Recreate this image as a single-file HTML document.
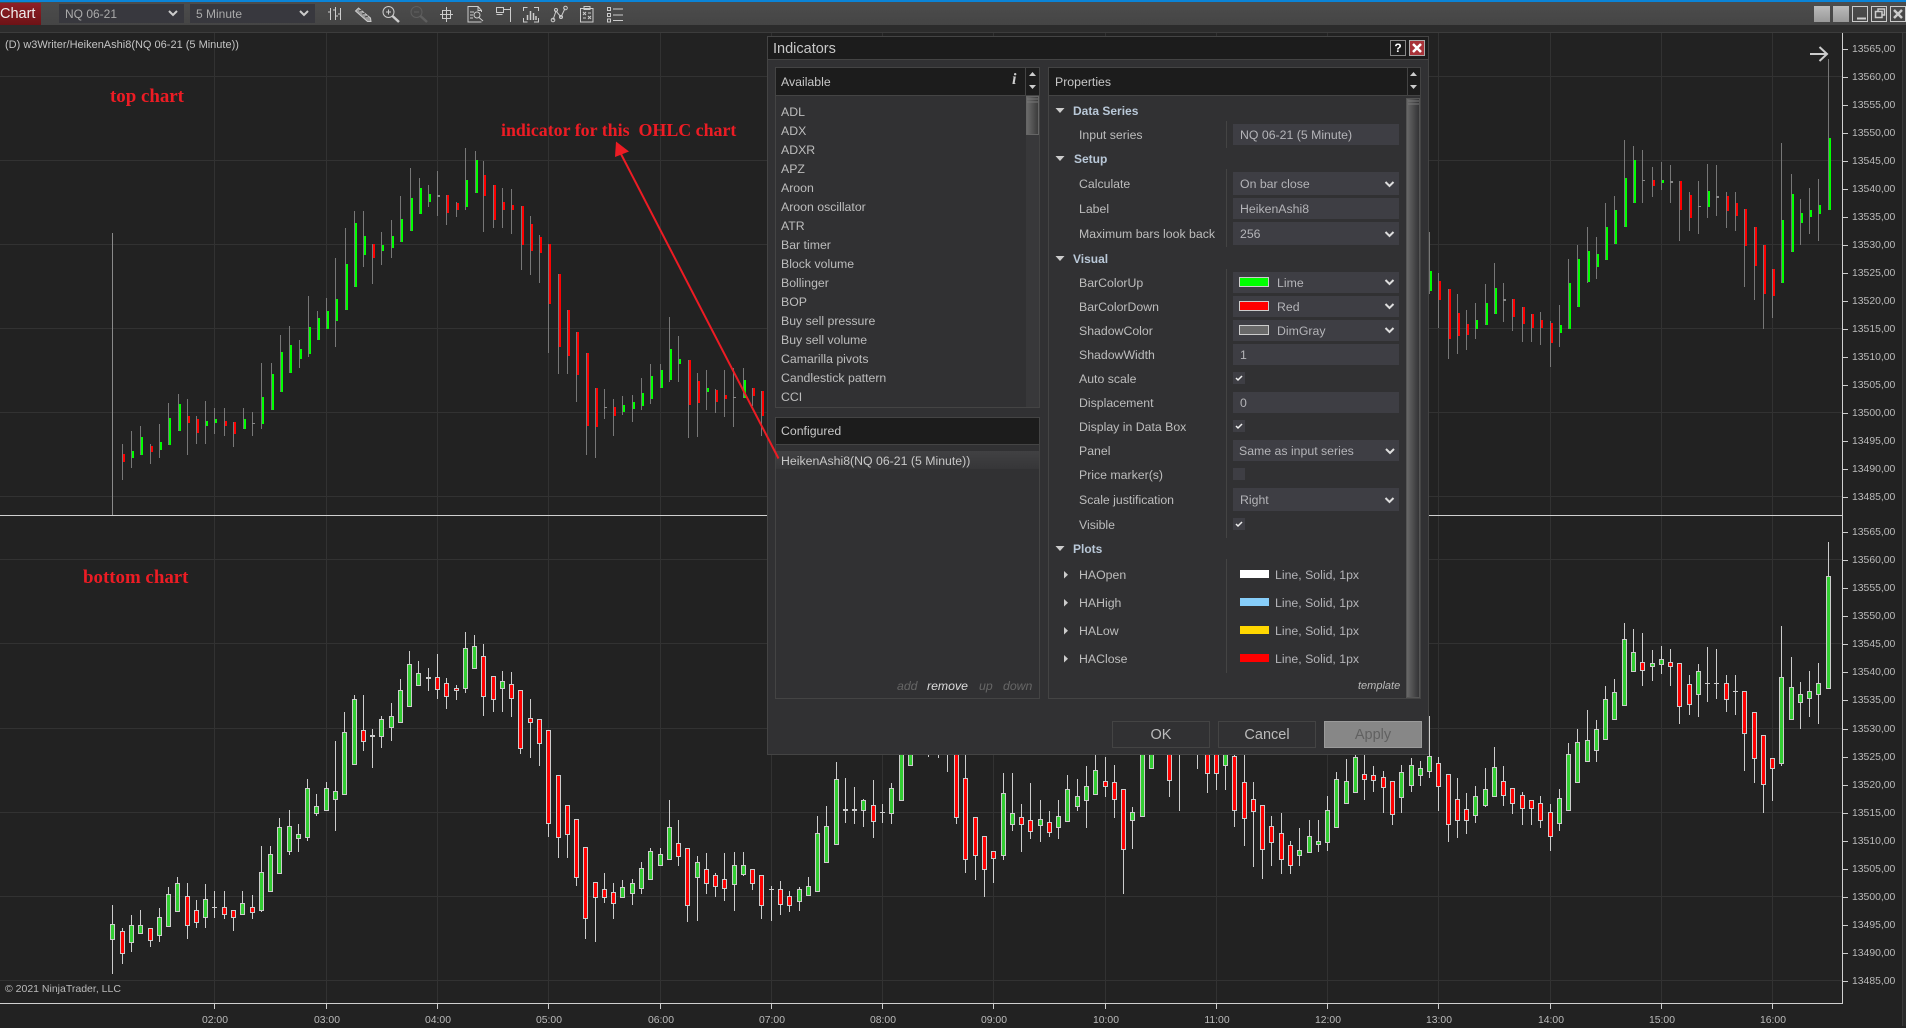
<!DOCTYPE html>
<html><head><meta charset="utf-8"><title>Chart</title>
<style>
html,body{margin:0;padding:0;background:#222;}
body{width:1906px;height:1026px;position:relative;overflow:hidden;font-family:"Liberation Sans",sans-serif;font-size:12.3px;color:#bdbdbd;}
div,span{position:absolute;white-space:pre;}
.y{left:1852px;font-size:10.4px;line-height:14px;height:14px;color:#bbb;margin-top:1px;}
.x{top:1014px;font-size:10.4px;line-height:14px;color:#bbb;width:40px;text-align:center;}
.r{color:#ed1c24;font-family:"Liberation Serif",serif;font-weight:bold;font-size:18.9px;line-height:22px;}
.h{background:#1c1c1c;border:1px solid #444;box-sizing:border-box;}
.t{line-height:16px;height:16px;}
.l{left:1079px;line-height:16px;height:16px;}
.b{left:1073px;line-height:16px;height:16px;font-weight:bold;font-size:12px;color:#b9c8d8;}
.f{left:1233px;width:166px;background:#3e3e44;}
.v{left:1240px;line-height:16px;height:16px;color:#b4b4b8;}
.c{left:1233px;width:12px;height:12px;background:#3e3e44;}
.s{left:1239px;width:30px;height:10px;box-sizing:border-box;border:1px solid #ccc;}
.p{left:1240px;width:29px;height:8px;}
.i{left:781px;line-height:16px;height:16px;}
.btn{top:721px;height:27px;width:98px;box-sizing:border-box;border:1px solid #444;text-align:center;line-height:27px;font-size:14.5px;}
.w{top:6px;width:16px;height:16px;box-sizing:border-box;}
</style></head><body>

<svg id="chart" width="1906" height="1026" style="position:absolute;left:0;top:0" shape-rendering="crispEdges"></svg>

<!-- toolbar -->
<div style="left:0;top:0;width:1906px;height:2px;background:#0a84d8"></div>
<div style="left:0;top:2px;width:1906px;height:23px;background:linear-gradient(#4c4c4c,#454545)"></div>
<div style="left:0;top:25px;width:1906px;height:7px;background:#2c2c2c"></div>
<div style="left:0;top:32px;width:1906px;height:1px;background:#3c3c3c"></div>
<div style="left:0;top:3px;width:41px;height:22px;background:linear-gradient(#8f2026,#6e1216);color:#eee;font-size:14.5px;line-height:23px;">Chart</div>
<div style="left:59px;top:4px;width:125px;height:19px;background:#38383e"></div>
<div style="left:65px;top:6px;line-height:17px;font-size:12px;color:#aaa">NQ 06-21</div>
<div style="left:190px;top:4px;width:125px;height:19px;background:#38383e"></div>
<div style="left:196px;top:6px;line-height:17px;font-size:12px;color:#aaa">5 Minute</div>

<div class="w" style="left:1814px;background:linear-gradient(#bbb,#999)"></div>
<div class="w" style="left:1833px;background:linear-gradient(#bbb,#999)"></div>
<div class="w" style="left:1852px;border:1px solid #ccc"></div>
<div class="w" style="left:1871px;border:1px solid #ccc"></div>
<div class="w" style="left:1890px;border:1px solid #ccc"></div>

<!-- chart text -->
<div style="left:5px;top:37px;font-size:11px;line-height:16px;color:#c4c4c4">(D) w3Writer/HeikenAshi8(NQ 06-21 (5 Minute))</div>
<div class="r" style="left:110px;top:86px">top chart</div>
<div class="r" style="left:501px;top:119px;font-size:17.9px">indicator for this  OHLC chart</div>
<div class="r" style="left:83px;top:567px">bottom chart</div>
<div style="left:5px;top:981px;font-size:10.5px;line-height:16px;color:#bbb">© 2021 NinjaTrader, LLC</div>

<div class="y" style="top:42px">13565,00</div><div class="y" style="top:70px">13560,00</div><div class="y" style="top:98px">13555,00</div><div class="y" style="top:126px">13550,00</div><div class="y" style="top:154px">13545,00</div><div class="y" style="top:182px">13540,00</div><div class="y" style="top:210px">13535,00</div><div class="y" style="top:238px">13530,00</div><div class="y" style="top:266px">13525,00</div><div class="y" style="top:294px">13520,00</div><div class="y" style="top:322px">13515,00</div><div class="y" style="top:350px">13510,00</div><div class="y" style="top:378px">13505,00</div><div class="y" style="top:406px">13500,00</div><div class="y" style="top:434px">13495,00</div><div class="y" style="top:462px">13490,00</div><div class="y" style="top:490px">13485,00</div>
<div class="y" style="top:525px">13565,00</div><div class="y" style="top:553px">13560,00</div><div class="y" style="top:581px">13555,00</div><div class="y" style="top:609px">13550,00</div><div class="y" style="top:637px">13545,00</div><div class="y" style="top:665px">13540,00</div><div class="y" style="top:693px">13535,00</div><div class="y" style="top:722px">13530,00</div><div class="y" style="top:750px">13525,00</div><div class="y" style="top:778px">13520,00</div><div class="y" style="top:806px">13515,00</div><div class="y" style="top:834px">13510,00</div><div class="y" style="top:862px">13505,00</div><div class="y" style="top:890px">13500,00</div><div class="y" style="top:918px">13495,00</div><div class="y" style="top:946px">13490,00</div><div class="y" style="top:974px">13485,00</div>

<div class="x" style="left:195px">02:00</div><div class="x" style="left:307px">03:00</div><div class="x" style="left:418px">04:00</div><div class="x" style="left:529px">05:00</div><div class="x" style="left:641px">06:00</div><div class="x" style="left:752px">07:00</div><div class="x" style="left:863px">08:00</div><div class="x" style="left:974px">09:00</div><div class="x" style="left:1086px">10:00</div><div class="x" style="left:1197px">11:00</div><div class="x" style="left:1308px">12:00</div><div class="x" style="left:1419px">13:00</div><div class="x" style="left:1531px">14:00</div><div class="x" style="left:1642px">15:00</div><div class="x" style="left:1753px">16:00</div>

<!-- dialog -->
<div style="left:767px;top:36px;width:662px;height:719px;background:#313133;border:1px solid #444;box-sizing:border-box"></div>
<div style="left:767px;top:36px;width:662px;height:24px;background:#1c1c1c;border:1px solid #444;box-sizing:border-box"></div>
<div style="left:773px;top:40px;font-size:14.5px;line-height:18px;color:#c8c8c8">Indicators</div>
<div style="left:1390px;top:40px;width:16px;height:16px;box-sizing:border-box;border:1px solid #888;background:#1c1c1c;color:#fff;font-weight:bold;font-size:12px;line-height:14px;text-align:center">?</div>
<div style="left:1409px;top:40px;width:16px;height:16px;box-sizing:border-box;border:1px solid #aaa;background:#a83238"></div>

<!-- available -->
<div style="left:775px;top:95px;width:265px;height:313px;border:1px solid #444;box-sizing:border-box;border-top:0"></div>
<div class="h" style="left:775px;top:67px;width:265px;height:29px"></div>
<div style="left:1025px;top:67px;width:1px;height:28px;background:#444"></div>
<div class="t" style="left:781px;top:74px;color:#c8c8c8">Available</div>
<div style="left:1012px;top:71px;font-family:'Liberation Serif',serif;font-style:italic;font-weight:bold;font-size:16px;line-height:18px;color:#ccc">i</div>
<div style="left:1026px;top:96px;width:13px;height:311px;background:#38383a"></div>
<div style="left:1026px;top:96px;width:13px;height:39px;box-sizing:border-box;border:1px solid #666;background:linear-gradient(90deg,#6a6a6a,#3c3c3c)"></div>
<div class="i" style="top:104px">ADL</div><div class="i" style="top:123px">ADX</div><div class="i" style="top:142px">ADXR</div><div class="i" style="top:161px">APZ</div><div class="i" style="top:180px">Aroon</div><div class="i" style="top:199px">Aroon oscillator</div><div class="i" style="top:218px">ATR</div><div class="i" style="top:237px">Bar timer</div><div class="i" style="top:256px">Block volume</div><div class="i" style="top:275px">Bollinger</div><div class="i" style="top:294px">BOP</div><div class="i" style="top:313px">Buy sell pressure</div><div class="i" style="top:332px">Buy sell volume</div><div class="i" style="top:351px">Camarilla pivots</div><div class="i" style="top:370px">Candlestick pattern</div><div class="i" style="top:389px">CCI</div>

<!-- configured -->
<div style="left:775px;top:444px;width:265px;height:255px;border:1px solid #444;box-sizing:border-box;border-top:0"></div>
<div class="h" style="left:775px;top:417px;width:265px;height:28px"></div>
<div class="t" style="left:781px;top:423px;color:#c8c8c8">Configured</div>
<div style="left:776px;top:451px;width:263px;height:18px;background:linear-gradient(#414143,#363638)"></div>
<div class="t" style="left:781px;top:453px;color:#c8c8c8">HeikenAshi8(NQ 06-21 (5 Minute))</div>
<div class="t" style="left:897px;top:678px;font-style:italic;color:#666">add</div>
<div class="t" style="left:927px;top:678px;font-style:italic;color:#ddd">remove</div>
<div class="t" style="left:979px;top:678px;font-style:italic;color:#666">up</div>
<div class="t" style="left:1003px;top:678px;font-style:italic;color:#666">down</div>

<!-- properties -->
<div style="left:1048px;top:95px;width:373px;height:604px;border:1px solid #444;box-sizing:border-box;border-top:0"></div>
<div class="h" style="left:1048px;top:67px;width:373px;height:29px"></div>
<div style="left:1407px;top:67px;width:1px;height:28px;background:#444"></div>
<div class="t" style="left:1055px;top:74px;color:#c8c8c8">Properties</div>
<div style="left:1406px;top:98px;width:14px;height:600px;box-sizing:border-box;border:1px solid #555;background:linear-gradient(90deg,#686868,#333335)"></div>
<div style="left:1226px;top:121px;width:1px;height:27px;background:#444"></div>
<div style="left:1226px;top:169px;width:1px;height:78px;background:#444"></div>
<div style="left:1226px;top:269px;width:1px;height:269px;background:#444"></div>
<div style="left:1226px;top:559px;width:1px;height:114px;background:#444"></div>

<div class="b" style="top:103px">Data Series</div>
<div class="l" style="top:127px">Input series</div>
<div class="f" style="top:124px;height:21px"></div><div class="v" style="top:127px">NQ 06-21 (5 Minute)</div>
<div class="b" style="top:151px;left:1074px">Setup</div>
<div class="l" style="top:176px">Calculate</div>
<div class="f" style="top:172px;height:23px"></div><div class="v" style="top:176px">On bar close</div>
<div class="l" style="top:201px">Label</div>
<div class="f" style="top:198px;height:21px"></div><div class="v" style="top:201px">HeikenAshi8</div>
<div class="l" style="top:226px">Maximum bars look back</div>
<div class="f" style="top:222px;height:23px"></div><div class="v" style="top:226px">256</div>
<div class="b" style="top:251px">Visual</div>
<div class="l" style="top:275px">BarColorUp</div>
<div class="f" style="top:272px;height:21px"></div><div class="s" style="top:277px;background:#0f0"></div><div class="v" style="left:1277px;top:275px">Lime</div>
<div class="l" style="top:299px">BarColorDown</div>
<div class="f" style="top:296px;height:21px"></div><div class="s" style="top:301px;background:#f00"></div><div class="v" style="left:1277px;top:299px">Red</div>
<div class="l" style="top:323px">ShadowColor</div>
<div class="f" style="top:320px;height:21px"></div><div class="s" style="top:325px;background:#696969"></div><div class="v" style="left:1277px;top:323px">DimGray</div>
<div class="l" style="top:347px">ShadowWidth</div>
<div class="f" style="top:344px;height:21px"></div><div class="v" style="top:347px">1</div>
<div class="l" style="top:371px">Auto scale</div><div class="c" style="top:372px"></div>
<div class="l" style="top:395px">Displacement</div>
<div class="f" style="top:392px;height:21px"></div><div class="v" style="top:395px">0</div>
<div class="l" style="top:419px">Display in Data Box</div><div class="c" style="top:420px"></div>
<div class="l" style="top:443px">Panel</div>
<div class="f" style="top:440px;height:21px"></div><div class="v" style="left:1239px;top:443px">Same as input series</div>
<div class="l" style="top:467px">Price marker(s)</div><div class="c" style="top:468px"></div>
<div class="l" style="top:492px">Scale justification</div>
<div class="f" style="top:488px;height:23px"></div><div class="v" style="top:492px">Right</div>
<div class="l" style="top:517px">Visible</div><div class="c" style="top:518px"></div>
<div class="b" style="top:541px">Plots</div>
<div class="l" style="top:567px">HAOpen</div><div class="p" style="top:570px;background:#fff"></div><div class="v" style="left:1275px;top:567px">Line, Solid, 1px</div>
<div class="l" style="top:595px">HAHigh</div><div class="p" style="top:598px;background:#87cefa"></div><div class="v" style="left:1275px;top:595px">Line, Solid, 1px</div>
<div class="l" style="top:623px">HALow</div><div class="p" style="top:626px;background:#ffd700"></div><div class="v" style="left:1275px;top:623px">Line, Solid, 1px</div>
<div class="l" style="top:651px">HAClose</div><div class="p" style="top:654px;background:#f00"></div><div class="v" style="left:1275px;top:651px">Line, Solid, 1px</div>
<div class="t" style="left:1358px;top:678px;font-style:italic;font-size:11px;color:#bbb">template</div>

<div class="btn" style="left:1112px;color:#bbb">OK</div>
<div class="btn" style="left:1218px;color:#bbb">Cancel</div>
<div class="btn" style="left:1324px;background:#878787;border-color:#9a9a9a;color:#616161">Apply</div>

<!-- overlay icons -->
<svg width="1906" height="1026" style="position:absolute;left:0;top:0;pointer-events:none">
<g fill="none" stroke="#ccc" stroke-width="1">
<path d="M330.500 8v12M335.500 7v13M340.500 8v12M328 12h2.500M335.500 10h-2.500M335.500 16h2.500M340.500 14h-2.500"/>
<path d="M355.500 11L358.500 8L370.500 18L371 21.500L367.500 21.500Z" fill="#999"/>
<path d="M359 11l3 -1M362 14l3 -1M365 17l3 -1" stroke="#444"/>
<circle cx="388.500" cy="12" r="5.500"/><path d="M386 12h5M388.500 9.500v5"/><path d="M392.500 16L399 22" stroke-width="2.500"/>
<g stroke="#5e5e5e"><circle cx="416.500" cy="12" r="5.500"/><path d="M414 12h5"/><path d="M420.500 16L427 22" stroke-width="2.500"/></g>
<path d="M442.500 10.500h8v8h-8zM446.500 7v15M440 14.500h13"/>
<path d="M481.500 12V10.500L478 6.500h-10v15.500h13.500M478 6.500v4h3.500M470 12h4M470 15h3M470 18h3"/><circle cx="477" cy="15" r="3"/><path d="M479 17.500L483 21"/>
<path d="M496.500 7.500h7v5h-7zM503.500 9.500h7M510.500 7v15M496.500 14.500h6"/>
<path d="M523.500 11V7.500h4M534 7.500h4.500V11M523.500 18v4h4M534 22h4.500v-4"/>
<path d="M527.500 20v-5M530.500 20v-9M533.500 20v-7M536 20v-4" stroke-width="1.500"/>
<path d="M553 20L556 11L561 17L565 8.500"/><circle cx="553" cy="20" r="1.800"/><circle cx="556" cy="10" r="1.500"/><circle cx="561" cy="17" r="1.500"/><circle cx="565.500" cy="8" r="1.800"/>
<path d="M580.500 8.500h12.500v13.500h-12.500zM584 6.500h6v3h-6zM583 12l3 3M586 12l-3 3M588 16l3 3M591 16l-3 3M583 18h3M588 13h3"/>
<path d="M607.500 7.500h3v3h-3zM607.500 13.500h3v3h-3zM607.500 19h3v3h-3zM613 9h10M613 15h10M613 20.500h10"/>
</g>
<g fill="none" stroke="#ccc" stroke-width="2">
<path d="M169 11l4 4 4-4M300 11l4 4 4-4"/>
</g>
<path d="M1857 18.500h9" stroke="#ccc" stroke-width="2"/>
<path d="M1875.500 11.500h6.500v6h-6.500zM1878 11.500v-2.500h6.500v6h-2.500" fill="none" stroke="#ccc" stroke-width="1.500"/>
<path d="M1894 10l8 8M1902 10l-8 8" stroke="#ccc" stroke-width="2.500"/>
<path d="M1413 44l8 8M1421 44l-8 8" stroke="#fff" stroke-width="2.500"/>
<g fill="#ccc"><path d="M1029 76l3.500-4 3.500 4zM1029 85h7l-3.500 4zM1410 76l3.500-4 3.500 4zM1410 85h7l-3.500 4z"/>
<path d="M1055.500 108h9l-4.500 5zM1055.500 156h9l-4.500 5zM1055.500 256h9l-4.500 5zM1055.500 546h9l-4.500 5z"/>
<path d="M1064 571l4 3.700-4 3.800zM1064 599l4 3.700-4 3.800zM1064 627l4 3.700-4 3.800zM1064 655l4 3.700-4 3.800z"/></g>
<g fill="none" stroke="#ddd" stroke-width="2">
<path d="M1385.500 182l4 4 4-4M1385.500 232l4 4 4-4M1385.500 280l4 4 4-4M1385.500 304l4 4 4-4M1385.500 328l4 4 4-4M1386 449l4 4 4-4M1385.500 498l4 4 4-4"/></g>
<g fill="none" stroke="#eee" stroke-width="1.500">
<path d="M1236 378l2 2 4-4M1236 426l2 2 4-4M1236 524l2 2 4-4"/></g>
<path d="M1027 99h11M1027 102h11M1408 101h11M1408 104h11" stroke="#777"/>
<path d="M778.500 458.500L621 154" stroke="#ed1c24" stroke-width="2" fill="none"/>
<path d="M616 141.500L615 157L629 151.500Z" fill="#ed1c24"/>
<path d="M1810 54h17M1819.500 47l7.500 7-7.500 7" fill="none" stroke="#ccc" stroke-width="2"/>
</svg>

<script>
(function(){
var s='';
function R(x,y,w,h,c){s+='<rect x="'+x+'" y="'+y+'" width="'+w+'" height="'+h+'" fill="'+c+'"/>';}
var G='#323232';
[214,326,437,548,660,771,882,993,1105,1216,1327,1438,1550,1661,1772].forEach(function(x){R(x,33,1,970,G);});
[76,160,244,328,412,496,559,643,728,812,896,980].forEach(function(y){R(0,y,1842,1,G);});
R(1902,32,1,994,'#3a3a3a');R(1903,32,3,994,'#2a2a2a');
R(0,515,1842,1,'#d0d0d0');R(0,1003,1843,1,'#d0d0d0');R(1842,33,1,971,'#d0d0d0');
[49,77,105,133,161,189,217,245,273,301,329,357,385,413,441,469,497,532,560,588,616,644,672,700,729,757,785,813,841,869,897,925,953,981].forEach(function(y){R(1843,y,5,1,'#ccc');});
[214,326,437,548,660,771,882,993,1105,1216,1327,1438,1550,1661,1772].forEach(function(x){R(x,1004,1,5,'#ccc');});
R(112,233,1,282,'#8a8a8a');

function bot(ox,oy,a){a.forEach(function(b){
 var c=Math.floor(ox+b[0]/3),wt=Math.round(oy+b[1]/3),wb=Math.round(oy+b[2]/3),bt=Math.round(oy+b[3]/3),bb=Math.round(oy+b[4]/3),k=b[5];
 R(c,wt,1,Math.max(1,wb-wt),'#ccc');
 if(k=='W')return;
 if(k=='D'){R(c-2,bt,5,Math.max(1,bb-bt),'#ccc');return;}
 R(c-2,bt,5,bb-bt+1,'#ccc');
 if(bb-bt>1)R(c-1,bt+1,3,bb-bt-1,k=='G'?'#32cd32':'#ff0000');
});}
function tp(ox,oy,sx,a){a.forEach(function(b){
 var c=Math.floor(ox+b[0]/sx),wt=Math.round(oy+b[1]/3),wb=Math.round(oy+b[2]/3),bt=Math.round(oy+b[3]/3),bb=Math.round(oy+b[4]/3),k=b[5];
 R(c,wt,1,Math.max(1,wb-wt),'#777');
 if(k=='D'){R(c,bt,3,Math.max(1,bb-bt),'#888');return;}
 R(c,bt,3,Math.max(1,bb-bt),'#777');
 if(bb-bt>1)R(c+1,bt,2,bb-bt,k=='G'?'#00ff00':'#ff0000');
});}

bot(90,600,[[67,915,1122,973,1016,'G'],[97,985,1092,994,1058,'R'],[124,945,1056,976,1025,'G'],[151,930,998,976,998,'G'],[181,985,1041,985,1019,'R'],[208,924,1026,952,1004,'G'],[235,861,977,883,977,'G'],[262,831,932,850,932,'G'],[292,850,1017,889,974,'R'],[319,900,984,931,965,'R'],[346,852,984,898,950,'G'],[373,873,954,921,923,'D'],[403,873,957,922,941,'R'],[430,931,993,931,950,'R'],[457,873,941,910,941,'G'],[487,885,957,922,935,'R'],[514,738,936,817,930,'G'],[541,738,872,763,872,'G'],[568,654,818,682,818,'G'],[598,630,765,679,752,'G'],[625,672,756,703,713,'G'],[652,537,723,565,710,'G'],[679,582,648,619,638,'G'],[709,546,629,565,629,'G'],[736,423,693,574,596,'G'],[763,336,581,397,581,'G'],[793,285,491,298,491,'G'],[820,285,453,391,422,'R'],[847,387,504,406,410,'D'],[874,349,444,358,407,'G'],[904,309,423,349,380,'G'],[931,237,365,271,365,'G'],[958,153,317,193,317,'G'],[985,183,254,220,254,'G'],[1015,204,273,232,236,'D'],[1042,162,297,232,266,'R'],[1069,234,327,250,287,'R'],[1099,255,300,265,271,'R'],[1126,96,279,145,265,'G'],[1153,105,203,139,203,'G'],[1180,132,348,169,287,'R'],[1210,229,336,229,296,'R'],[1237,213,336,244,263,'G'],[1264,216,351,253,293,'R'],[1291,271,462,271,443,'R']]);
bot(520,640,[[31,177,354,235,245,'R'],[58,238,378,238,308,'R'],[85,271,591,271,548,'R'],[115,406,654,406,590,'R'],[142,496,654,496,581,'R'],[169,538,738,538,710,'R'],[196,622,897,622,833,'R'],[226,727,906,727,770,'R'],[253,699,789,748,770,'R'],[280,729,837,757,788,'R'],[307,720,773,742,770,'G'],[337,717,795,730,758,'G'],[364,666,762,685,743,'G'],[391,624,716,634,716,'G'],[421,624,678,643,674,'G'],[448,480,656,562,656,'G'],[475,540,678,610,647,'R'],[502,625,846,625,794,'R'],[532,648,843,667,710,'G'],[559,639,762,688,728,'R'],[586,699,771,706,737,'R'],[613,639,783,718,743,'R'],[643,636,813,676,731,'G'],[670,636,708,676,701,'G'],[697,688,750,688,728,'R'],[724,706,837,706,794,'R'],[754,738,843,747,750,'D'],[781,723,825,748,791,'R'],[808,753,816,769,794,'R'],[838,741,813,748,782,'G'],[865,711,765,739,765,'G'],[892,528,752,580,752,'G'],[919,498,665,559,665,'G'],[949,366,611,418,611,'G'],[976,414,549,508,512,'D'],[1003,441,552,508,512,'D'],[1030,477,561,481,509,'G'],[1060,420,594,496,542,'R'],[1087,492,549,516,519,'D'],[1114,429,552,445,518,'G'],[1144,300,479,300,479,'G'],[1171,300,374,300,374,'G'],[1225,300,350,0,0,'W'],[1255,300,353,0,0,'W'],[1282,300,395,0,0,'W']]);
bot(950,720,[[19,60,312,60,290,'R'],[46,60,459,175,416,'R'],[76,292,480,292,404,'R'],[103,349,531,349,446,'R'],[130,394,489,394,413,'R'],[160,159,420,220,404,'G'],[187,159,333,280,311,'G'],[214,252,396,292,311,'R'],[241,189,357,301,332,'R'],[271,240,366,298,314,'G'],[298,273,351,307,335,'R'],[325,240,357,289,320,'G'],[352,165,302,208,302,'G'],[382,177,273,229,257,'G'],[409,138,324,199,241,'G'],[436,60,222,151,221,'G'],[466,111,231,184,197,'R'],[493,135,294,187,236,'R'],[520,208,522,208,386,'R'],[547,261,387,277,299,'G'],[577,60,287,60,287,'G'],[604,60,143,60,143,'G'],[658,60,231,60,179,'R'],[688,60,273,0,0,'W'],[742,60,147,0,0,'W'],[772,60,219,60,158,'R'],[799,60,210,60,158,'R'],[826,60,210,60,134,'G'],[853,60,321,109,269,'R'],[883,60,378,187,293,'R'],[910,186,441,238,272,'R'],[937,256,477,256,386,'R'],[964,288,438,319,365,'R'],[994,279,462,340,416,'R'],[1021,364,462,376,434,'R'],[1048,324,438,391,404,'G'],[1078,300,396,349,395,'G'],[1105,300,396,364,371,'G'],[1132,228,393,271,365,'G'],[1159,156,320,178,320,'G'],[1189,117,248,184,248,'G'],[1216,60,215,112,215,'G'],[1243,60,240,163,176,'R'],[1270,138,216,166,179,'R'],[1300,153,279,172,200,'R'],[1327,184,315,184,281,'R'],[1354,135,279,157,230,'G'],[1384,114,216,136,194,'G'],[1411,123,198,145,164,'G']]);
bot(1420,530,[[28,558,744,679,724,'G'],[55,682,843,700,769,'R'],[85,733,936,733,883,'R'],[112,744,924,808,871,'R'],[139,789,912,838,871,'R'],[166,768,879,799,856,'G'],[196,714,830,778,826,'G'],[223,651,800,712,799,'G'],[250,708,828,754,796,'R'],[277,775,852,775,820,'R'],[307,786,885,796,835,'R'],[334,811,885,811,835,'R'],[361,798,894,820,871,'R'],[391,822,963,847,919,'R'],[418,777,903,805,880,'G'],[445,639,842,673,841,'G'],[472,597,757,637,757,'G'],[502,540,695,631,694,'G'],[529,570,696,598,661,'G'],[556,468,628,508,628,'G'],[583,447,568,487,568,'G'],[613,279,526,328,526,'G'],[640,297,424,367,424,'G'],[667,309,468,397,421,'R'],[697,360,453,400,409,'G'],[724,348,432,388,403,'G'],[751,357,468,397,409,'R'],[778,400,582,400,529,'R'],[808,435,555,463,523,'R'],[835,402,561,424,493,'G'],[862,351,516,459,462,'D'],[889,357,507,460,463,'D'],[919,435,546,460,508,'R'],[946,435,555,484,487,'D'],[973,484,723,484,610,'R'],[1003,547,759,547,685,'R'],[1030,616,849,616,763,'R'],[1057,685,813,685,715,'R'],[1084,288,708,442,700,'G'],[1114,381,568,472,568,'G'],[1141,456,597,493,517,'G'],[1168,423,561,484,505,'G'],[1195,399,582,460,493,'G'],[1225,36,475,139,475,'G']]);

tp(90,130,2.306,[[75,942,1049,973,995,'R'],[96,904,1014,964,983,'G'],[117,888,975,922,975,'G'],[139,942,1001,949,965,'R'],[160,882,985,937,959,'G'],[182,820,945,865,944,'G'],[203,793,903,823,902,'G'],[225,808,975,858,878,'R'],[246,858,942,868,908,'R'],[266,813,942,874,887,'G'],[288,835,912,868,878,'G'],[310,835,918,874,887,'R'],[332,877,950,877,911,'R'],[353,835,897,868,896,'G'],[375,847,918,880,882,'D'],[396,699,897,802,881,'G'],[418,699,840,733,839,'G'],[439,615,786,667,785,'G'],[461,588,729,646,728,'G'],[482,630,714,658,686,'G'],[503,498,681,591,671,'G'],[524,544,629,565,629,'G'],[546,504,597,544,596,'G'],[567,384,651,508,572,'G'],[589,294,540,403,539,'G'],[610,243,471,280,470,'G'],[631,243,411,319,374,'G'],[652,343,462,343,384,'R'],[673,306,405,345,362,'G'],[695,270,384,319,353,'G'],[717,198,336,268,335,'G'],[738,114,303,205,302,'G'],[759,144,252,175,251,'G'],[781,165,231,193,216,'G'],[801,123,258,195,200,'D'],[822,195,285,195,248,'R'],[846,216,261,220,240,'R'],[867,54,240,151,231,'G'],[888,63,189,91,188,'G'],[908,93,306,136,197,'R'],[930,165,294,165,270,'R'],[952,174,294,216,240,'R'],[973,177,312,225,240,'R'],[994,229,420,229,345,'R'],[1016,258,435,283,363,'R'],[1037,315,459,321,369,'R'],[1058,343,669,343,522,'R'],[1080,433,732,433,651,'R'],[1101,541,732,541,678,'R'],[1122,606,816,606,735,'R'],[1144,669,975,669,888,'R'],[1165,775,984,775,890,'R'],[1186,777,867,832,834,'D'],[1207,807,918,831,858,'R'],[1228,798,855,825,846,'G'],[1250,795,876,817,837,'G'],[1272,744,840,789,828,'G'],[1293,702,822,738,807,'G'],[1316,702,774,720,774,'G'],[1336,561,756,657,750,'G'],[1358,618,756,687,702,'G'],[1379,690,924,690,825,'R'],[1400,729,921,753,819,'R'],[1421,720,840,774,786,'G'],[1443,777,849,780,816,'R'],[1464,720,861,795,807,'R'],[1485,714,891,801,803,'D'],[1507,714,804,750,804,'G'],[1528,774,828,774,798,'R'],[1549,783,918,783,859,'R']]);
tp(1420,40,3,[[28,576,762,694,752,'G'],[55,700,864,724,780,'R'],[85,748,957,748,896,'R'],[112,762,942,820,888,'R'],[139,810,930,853,885,'R'],[166,790,897,841,866,'G'],[196,732,855,790,854,'G'],[223,669,822,745,821,'G'],[250,729,846,778,782,'D'],[277,778,873,778,830,'R'],[307,801,906,801,852,'R'],[334,823,906,823,864,'R'],[361,816,915,840,864,'R'],[391,843,981,849,909,'R'],[418,795,921,855,879,'G'],[445,657,866,730,866,'G'],[472,615,801,658,800,'G'],[502,561,728,634,727,'G'],[529,591,717,643,680,'G'],[556,489,660,562,659,'G'],[583,468,612,511,611,'G'],[613,300,560,415,560,'G'],[640,318,489,361,488,'G'],[667,330,489,421,424,'D'],[697,381,471,421,437,'R'],[724,366,450,421,428,'G'],[751,375,489,424,428,'D'],[778,424,603,424,509,'R'],[808,457,573,466,533,'R'],[835,423,582,498,500,'D'],[862,372,534,454,500,'G'],[889,376,528,469,475,'D'],[919,457,564,469,512,'R'],[946,457,573,490,527,'R'],[973,508,741,508,617,'R'],[1003,561,780,561,677,'R'],[1030,615,867,615,761,'R'],[1057,688,834,688,767,'R'],[1084,309,729,541,728,'G'],[1114,402,636,463,635,'G'],[1141,477,615,519,548,'G'],[1168,444,582,511,532,'G'],[1195,417,603,496,521,'G'],[1225,57,510,295,509,'G']]);
document.getElementById('chart').innerHTML=s;
})();
</script>
</body></html>
